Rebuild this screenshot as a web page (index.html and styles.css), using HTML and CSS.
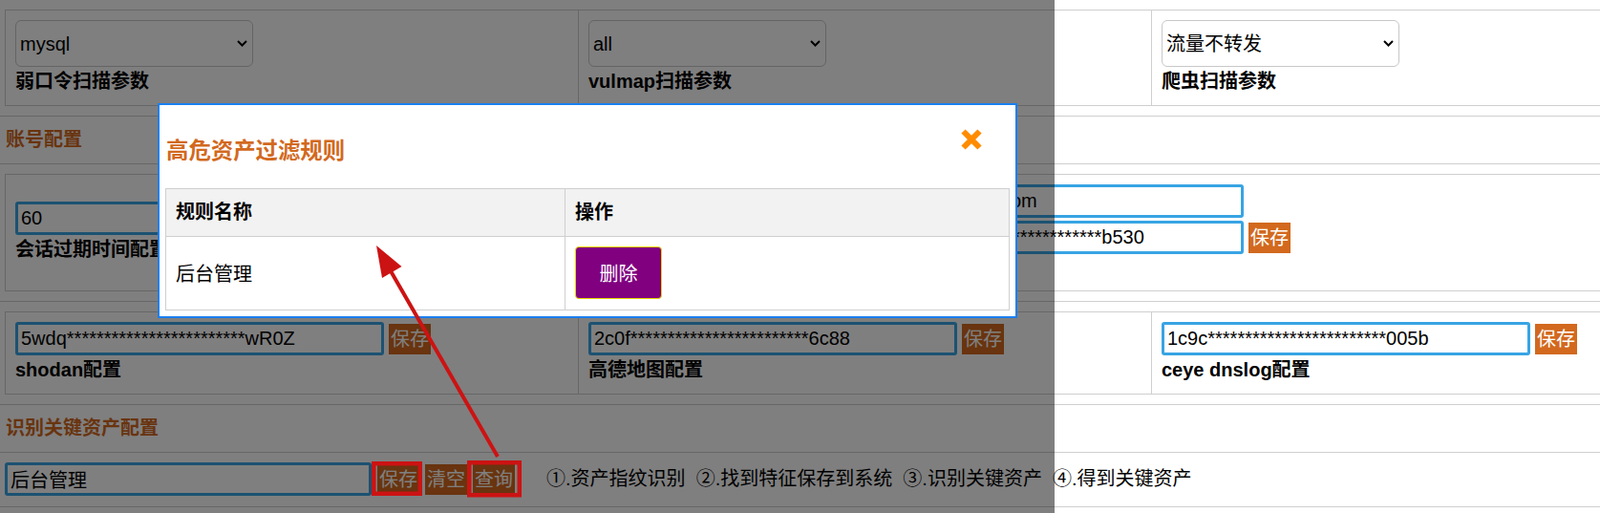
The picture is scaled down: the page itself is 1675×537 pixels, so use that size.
FILE: index.html
```html
<!DOCTYPE html>
<html lang="zh-CN">
<head>
<meta charset="utf-8">
<title>系统配置</title>
<link rel="stylesheet" href="styles.css">
</head>
<body>
<div class="page">
  <div class="row pad">
    <table class="grid g3">
      <tr>
        <td>
          <div class="sel"><select><option>mysql</option></select><svg class="chev" width="11" height="7" viewBox="0 0 11 7"><path d="M1 1 L5.5 5.5 L10 1" fill="none" stroke="#000" stroke-width="2"/></svg></div>
          <div class="label">弱口令扫描参数</div>
        </td>
        <td>
          <div class="sel"><select><option>all</option></select><svg class="chev" width="11" height="7" viewBox="0 0 11 7"><path d="M1 1 L5.5 5.5 L10 1" fill="none" stroke="#000" stroke-width="2"/></svg></div>
          <div class="label">vulmap扫描参数</div>
        </td>
        <td class="end">
          <div class="sel"><select><option>流量不转发</option></select><svg class="chev" width="11" height="7" viewBox="0 0 11 7"><path d="M1 1 L5.5 5.5 L10 1" fill="none" stroke="#000" stroke-width="2"/></svg></div>
          <div class="label">爬虫扫描参数</div>
        </td>
      </tr>
    </table>
  </div>

  <div class="row head">账号配置</div>

  <div class="row pad">
    <table class="grid g2">
      <tr>
        <td class="wide">
          <input class="txt" value="60">
          <div class="label">会话过期时间配置</div>
        </td>
        <td class="rest">
          <input class="txt" value="1234567@qq.com">
          <div class="ig stack"><input class="txt" value="d41d************************b530"><button class="btn">保存</button></div>
          <div class="label short">fofa配置</div>
        </td>
      </tr>
    </table>
  </div>

  <div class="row pad">
    <table class="grid g3">
      <tr>
        <td>
          <div class="ig"><input class="txt" value="5wdq************************wR0Z"><button class="btn">保存</button></div>
          <div class="label">shodan配置</div>
        </td>
        <td>
          <div class="ig"><input class="txt" value="2c0f************************6c88"><button class="btn">保存</button></div>
          <div class="label">高德地图配置</div>
        </td>
        <td class="end">
          <div class="ig"><input class="txt" value="1c9c************************005b"><button class="btn">保存</button></div>
          <div class="label">ceye dnslog配置</div>
        </td>
      </tr>
    </table>
  </div>

  <div class="row head">识别关键资产配置</div>

  <div class="row pad last">
    <div class="ig wide-gap">
      <input class="txt key" value="后台管理">
      <button class="btn">保存</button>
      <button class="btn">清空</button>
      <button class="btn">查询</button>
      <span class="steps">①.资产指纹识别&nbsp;&nbsp;②.找到特征保存到系统&nbsp;&nbsp;③.识别关键资产&nbsp;&nbsp;④.得到关键资产</span>
    </div>
  </div>
  <div class="row pad"></div>
</div>

<div class="mask"></div>

<div class="modal">
  <div class="modal-head">
    <h3 class="modal-title">高危资产过滤规则</h3>
    <svg class="close" width="24" height="24" viewBox="0 0 24 24"><path d="M3.5 3.5 L20.5 20.5 M20.5 3.5 L3.5 20.5" stroke="#ff8c00" stroke-width="6" fill="none"/></svg>
  </div>
  <table class="mt">
    <tr class="mt-head">
      <th class="c1">规则名称</th>
      <th>操作</th>
    </tr>
    <tr>
      <td class="c1">后台管理</td>
      <td><button class="del">删除</button></td>
    </tr>
  </table>
</div>

<svg class="notes" width="1675" height="537" viewBox="0 0 1675 537">
  <line x1="521" y1="478" x2="408" y2="282" stroke="#cc1313" stroke-width="4"/>
  <polygon points="394,257 420.5,279 400,291" fill="#cc1313"/>
  <rect x="391.25" y="485.25" width="48.5" height="31.5" fill="none" stroke="#cc1313" stroke-width="4.5"/>
  <rect x="491.25" y="484.25" width="52.5" height="34" fill="none" stroke="#cc1313" stroke-width="4.5"/>
</svg>
</body>
</html>
```

FILE: styles.css
```css
html, body {
  margin: 0;
  padding: 0;
  height: 100%;
  overflow: hidden;
  background: #fff;
}

body {
  position: relative;
  font-family: "Liberation Sans", "Noto Sans CJK SC", sans-serif;
  font-size: 20px;
  color: #000;
}

.page {
  width: 100%;
  overflow: hidden;
}

.row {
  border-bottom: 1px solid #cfcfcf;
}

.row.pad {
  padding: 10px 0 10px 5px;
}

.row.last {
  padding-bottom: 11px;
}

.row.head {
  height: 49px;
  line-height: 49px;
  padding-left: 6px;
  font-weight: bold;
  color: #d2691e;
}

.grid {
  border-collapse: separate;
  border-spacing: 0;
  table-layout: fixed;
  width: 1671px;
  border-top: 1px solid #cfcfcf;
  border-left: 1px solid #cfcfcf;
}

.grid td {
  box-sizing: border-box;
  width: 600px;
  padding: 10px;
  border-right: 1px solid #cfcfcf;
  border-bottom: 1px solid #cfcfcf;
  vertical-align: middle;
}

.grid td.end {
  width: 470px;
}

.grid td.wide {
  width: 900px;
}

.grid td.rest {
  width: 770px;
}

.label {
  font-weight: bold;
  line-height: 30px;
  white-space: nowrap;
}

.label.short {
  line-height: 28px;
}

.sel {
  position: relative;
  width: 249px;
  height: 49px;
}

.sel select {
  appearance: none;
  -webkit-appearance: none;
  box-sizing: border-box;
  width: 100%;
  height: 100%;
  margin: 0;
  padding: 0 28px 0 4px;
  border: 1px solid #c8c8c8;
  border-radius: 6px;
  background: #fff;
  font-family: "Liberation Sans", "Noto Sans CJK SC", sans-serif;
  font-size: 20px;
  color: #000;
}

.chev {
  position: absolute;
  right: 6px;
  top: 21px;
}

.txt {
  display: block;
  box-sizing: border-box;
  width: 386px;
  height: 35px;
  margin: 0;
  padding: 0 3px;
  border: 3px solid #38a4e4;
  border-radius: 3px;
  background: #fff;
  font-family: "Liberation Sans", "Noto Sans CJK SC", sans-serif;
  font-size: 20px;
  color: #000;
  outline: none;
}

.txt.key {
  width: 384px;
}

.ig {
  display: flex;
  align-items: center;
  gap: 5px;
}

.ig.stack {
  margin-top: 3px;
}

.ig.wide-gap {
  gap: 6px;
}

.btn {
  flex: none;
  width: 44px;
  height: 32px;
  margin: 0;
  padding: 0;
  border: 0;
  background: #d2691e;
  color: #fff;
  font-family: "Liberation Sans", "Noto Sans CJK SC", sans-serif;
  font-size: 20px;
  line-height: 32px;
}

.steps {
  margin-left: 27px;
  white-space: nowrap;
  line-height: 35px;
}

.mask {
  position: absolute;
  left: 0;
  top: 0;
  width: 1104px;
  height: 100%;
  background: rgba(0, 0, 0, 0.5);
}

.modal {
  position: absolute;
  left: 165px;
  top: 108px;
  width: 900px;
  height: 225px;
  box-sizing: border-box;
  border: 2px solid #1a7ff0;
  background: #fff;
  padding: 0 6px;
}

.modal-head {
  display: flex;
  align-items: flex-start;
  height: 87px;
}

.modal-title {
  margin: 33px 0 0 1px;
  font-size: 23.4px;
  line-height: 30px;
  font-weight: bold;
  color: #d2691e;
}

.close {
  margin: 24px 28px 0 auto;
}

.mt {
  width: 884px;
  border-collapse: separate;
  border-spacing: 0;
  table-layout: fixed;
  border-top: 1px solid #cfcfcf;
  border-left: 1px solid #cfcfcf;
}

.mt th,
.mt td {
  box-sizing: border-box;
  padding: 10px 10px 11px;
  border-right: 1px solid #cfcfcf;
  border-bottom: 1px solid #cfcfcf;
  text-align: left;
  vertical-align: middle;
  font-size: 20px;
}

.mt th {
  height: 50px;
  padding: 10px;
  line-height: 29px;
  font-weight: bold;
  background: #f2f2f2;
}

.mt .c1 {
  width: 418px;
}

.del {
  display: block;
  width: 91px;
  height: 55px;
  margin: 0;
  padding: 0;
  border: 1px solid #e8d800;
  border-radius: 4px;
  background: #800080;
  color: #fff;
  font-family: "Liberation Sans", "Noto Sans CJK SC", sans-serif;
  font-size: 20px;
}

.notes {
  position: absolute;
  left: 0;
  top: 0;
  pointer-events: none;
}
```
